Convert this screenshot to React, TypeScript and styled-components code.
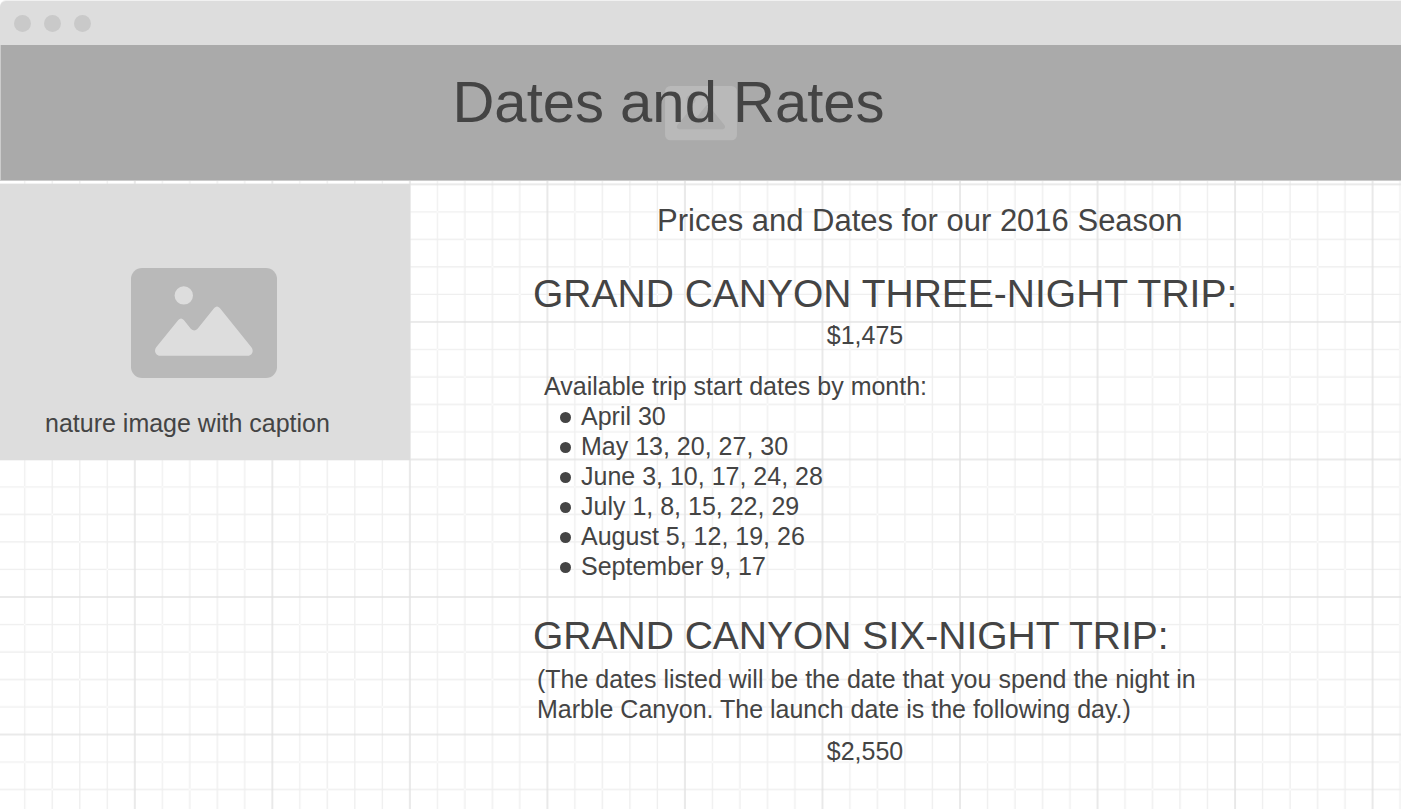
import React from "react";
import styled, { createGlobalStyle } from "styled-components";

const GlobalStyle = createGlobalStyle`
  *, *::before, *::after { box-sizing: border-box; }
  body {
    margin: 0;
    background: #fff;
    color: #444;
    font-family: "Liberation Sans", Arial, Helvetica, sans-serif;
  }
  h1, h2, h3, p, ul, figure { margin: 0; padding: 0; font-weight: 400; }
`;

const Page = styled.div`
  position: relative;
  min-height: 100vh;
  padding-top: 1px;
  overflow: hidden;
`;

const GridSvg = styled.svg`
  position: absolute;
  inset: 0;
  z-index: -1;
  width: 100%;
  height: 100%;
`;

const WindowBar = styled.div`
  display: flex;
  align-items: center;
  gap: 13px;
  height: 44px;
  padding: 0 14px;
  background: #ddd;
  border-top-left-radius: 6px;
  box-shadow: 0 -1px #f1f1f1;
`;

const Dot = styled.span`
  width: 17px;
  height: 17px;
  border-radius: 50%;
  background: #c9c9c9;
`;

const Banner = styled.header`
  display: grid;
  place-items: center;
  height: 136px;
  background: #aaa;
  border-left: 1px solid #ccc;
  border-bottom: 1px solid #ccc;

  > * { grid-area: 1 / 1; }
`;

const BannerPicture = styled.div`
  padding-top: 2px;
`;

const Title = styled.h1`
  position: relative;
  padding: 0 65px 22px 0;
  font-size: 58px;
  line-height: 70px;
  white-space: nowrap;
`;

const Picture = styled.svg<{ $width: number }>`
  display: block;
  width: ${(p) => p.$width}px;
  height: auto;
`;

const Columns = styled.div`
  display: flex;
  align-items: flex-start;
  padding-top: 3px;
`;

const ImageCard = styled.figure`
  display: flex;
  flex: none;
  flex-direction: column;
  align-items: center;
  width: 410px;
  padding: 84px 2px 22px 0;
  background: #ddd;
`;

const Caption = styled.figcaption`
  align-self: flex-start;
  padding: 30px 0 0 45px;
  font-size: 25px;
  line-height: 30px;
`;

const Content = styled.main`
  flex: 1;
  padding: 19px 20px 40px 123px;
`;

const Season = styled.h2`
  padding-left: 124px;
  font-size: 31px;
  line-height: 36px;
`;

const Trip = styled.section`
  padding-top: 32px;
`;

const TripTitle = styled.h3`
  font-size: 39px;
  line-height: 46px;
  white-space: nowrap;
`;

const Price = styled.p`
  max-width: 664px;
  padding-top: 3px;
  font-size: 25px;
  line-height: 30px;
  text-align: center;
`;

const Text = styled.p`
  max-width: 690px;
  font-size: 25px;
  line-height: 30px;
`;

const Schedule = styled.div`
  padding: 21px 0 0 11px;
`;

const Dates = styled.ul`
  list-style: none;
`;

const DateItem = styled.li`
  display: flex;
  align-items: center;
  gap: 10px;
  padding-left: 16px;
  font-size: 25px;
  line-height: 30px;

  &::before {
    content: "";
    width: 11px;
    height: 11px;
    margin-top: 2px;
    border-radius: 50%;
    background: #444;
  }
`;

const Note = styled.div`
  padding: 5px 0 9px 4px;
`;

const dates = [
  "April 30",
  "May 13, 20, 27, 30",
  "June 3, 10, 17, 24, 28",
  "July 1, 8, 15, 22, 29",
  "August 5, 12, 19, 26",
  "September 9, 17",
];

const steps = [1, 2, 3, 4].map((n) => n * 27.5);

function GridPaper() {
  return (
    <GridSvg aria-hidden="true">
      <defs>
        <pattern id="paper" x="134.8" y="184.4" width="137.53" height="137.53" patternUnits="userSpaceOnUse">
          {steps.map((s) => (
            <path key={s} d={`M${s - 0.7} 0h1.4v137.53h-1.4zM0 ${s - 0.7}v1.4h137.53v-1.4z`} fill="#efefef" />
          ))}
          <path d="M0 0h.8v137.53H0zM136.8 0h.8v137.53h-.8zM0 0h137.53v.8H0zM0 136.8h137.53v.8H0z" fill="#e3e3e3" />
        </pattern>
      </defs>
      <rect width="100%" height="100%" fill="url(#paper)" />
    </GridSvg>
  );
}

function ImageIcon({ width, frame, scene }: { width: number; frame: string; scene: string }) {
  return (
    <Picture $width={width} viewBox="0 0 146 110" aria-hidden="true">
      <rect width="146" height="110" rx="11" fill={frame} />
      <circle cx="52.8" cy="27.4" r="9.2" fill={scene} />
      <path
        d="M25.2 79.2 47.3 52Q50 49 52.8 52L59.8 60.8Q63.3 64.4 66.6 60.8L83.2 40Q86 37 88.8 40L120.4 79.2C123.4 83 120.8 87.8 116.5 87.8H29.5C25 87.8 22.4 83 25.2 79.2Z"
        fill={scene}
      />
    </Picture>
  );
}

export default function App() {
  return (
    <>
      <GlobalStyle />
      <Page>
        <GridPaper />
        <WindowBar>
          <Dot />
          <Dot />
          <Dot />
        </WindowBar>
        <Banner>
          <BannerPicture>
            <ImageIcon width={72} frame="#b9b9b9" scene="#adadad" />
          </BannerPicture>
          <Title>Dates and Rates</Title>
        </Banner>
        <Columns>
          <ImageCard>
            <ImageIcon width={146} frame="#b9b9b9" scene="#ddd" />
            <Caption>nature image with caption</Caption>
          </ImageCard>
          <Content>
            <Season>Prices and Dates for our 2016 Season</Season>
            <Trip>
              <TripTitle>GRAND CANYON THREE-NIGHT TRIP:</TripTitle>
              <Price>$1,475</Price>
              <Schedule>
                <Text>Available trip start dates by month:</Text>
                <Dates>
                  {dates.map((d) => (
                    <DateItem key={d}>{d}</DateItem>
                  ))}
                </Dates>
              </Schedule>
            </Trip>
            <Trip>
              <TripTitle>GRAND CANYON SIX-NIGHT TRIP:</TripTitle>
              <Note>
                <Text>
                  (The dates listed will be the date that you spend the night in Marble Canyon. The launch date is the
                  following day.)
                </Text>
              </Note>
              <Price>$2,550</Price>
            </Trip>
          </Content>
        </Columns>
      </Page>
    </>
  );
}
